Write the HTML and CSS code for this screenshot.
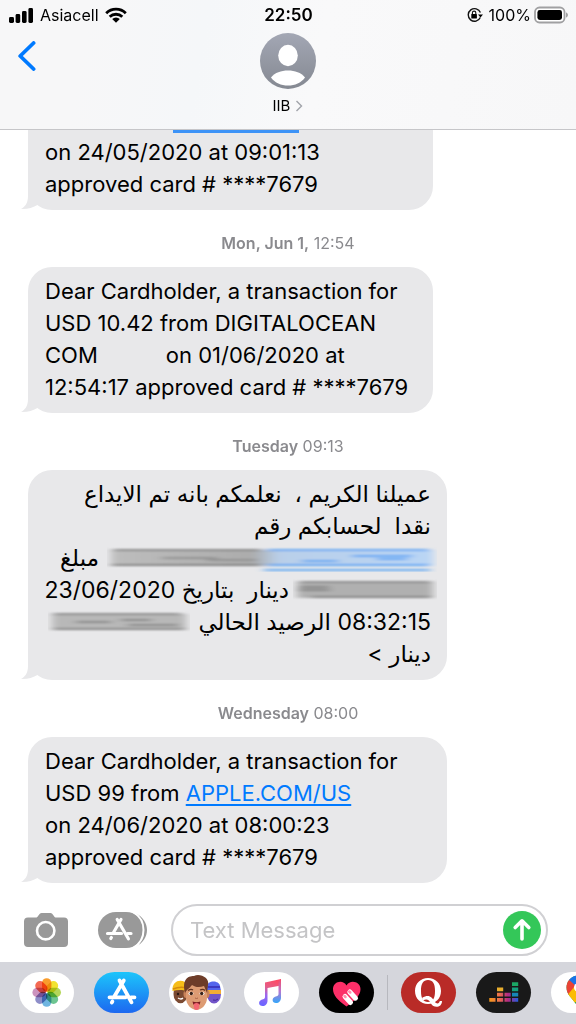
FILE: index.html
```
<!DOCTYPE html>
<html lang="en">
<head>
<meta charset="utf-8">
<meta name="viewport" content="width=device-width, initial-scale=1">
<title>IIB</title>
<link rel="stylesheet" href="styles.css">
</head>
<body>
<div class="screen">
  <header class="header">
    <div class="status">
      <div class="status-left">
        <svg class="signal" width="25" height="16" viewBox="0 0 25 16"><rect x="0" y="10" width="5" height="6" rx="1.4"/><rect x="6.6" y="7" width="4.6" height="9" rx="1.4"/><rect x="13" y="4" width="4.6" height="12" rx="1.4"/><rect x="19.4" y="1" width="4.6" height="15" rx="1.4"/></svg>
        <span>Asiacell</span>
        <svg class="wifi" width="22" height="16" viewBox="0 0 22 16"><g fill="none" stroke="#000" stroke-width="2.8"><path d="M1.2 6.2a14 14 0 0 1 19.6 0"/><path d="M4.7 9.8a9 9 0 0 1 12.6 0"/></g><path d="M11 15.8 7.2 12a5.4 5.4 0 0 1 7.6 0z"/></svg>
      </div>
      <time class="clock">22:50</time>
      <div class="status-right">
        <svg width="16" height="16" viewBox="0 0 16 16"><path d="M13.3 10.5A6.3 6.3 0 1 1 13.4 5.6" fill="none" stroke="#111" stroke-width="1.4"/><path d="M11 7.4h5l-2.500 3.200z"/><rect x="4.300" y="7" width="5.600" height="4.600" rx=".6"/><path d="M5.400 7.200V5.800a1.700 1.700 0 0 1 3.400 0v1.400" fill="none" stroke="#111" stroke-width="1.100"/></svg>
        <span>100%</span>
        <svg width="34" height="18" viewBox="0 0 34 18"><rect x="1" y="1.500" width="29.500" height="15" rx="4.500" fill="#fff" stroke="#a0a0a2" stroke-width="1.800"/><rect x="3.400" y="4" width="24.600" height="10" rx="2.400"/><path d="M32 6.300q2 1 2 2.700t-2 2.700z" fill="#a0a0a2"/></svg>
      </div>
    </div>
    <div class="nav">
      <button class="back" aria-label="Back"><svg width="18" height="30" viewBox="0 0 18 30"><path d="M15.600 2 2.200 15l13.400 13" fill="none" stroke="#007aff" stroke-width="3.800" stroke-linecap="round" stroke-linejoin="round"/></svg></button>
      <button class="contact">
        <svg width="56" height="56" viewBox="0 0 56 56"><defs><linearGradient id="av" x2="0" y2="1"><stop stop-color="#a3a7b4"/><stop offset="1" stop-color="#858992"/></linearGradient></defs><circle cx="28" cy="28" r="28" fill="url(#av)"/><ellipse cx="28" cy="22.500" rx="9.800" ry="10.700" fill="#fff"/><path d="M11 44.500C15 39.500 21 37.500 28 37.500s13 2 17 7c-4 5.500-10 8-17 8s-13-2.500-17-8z" fill="#fff"/></svg>
        <span class="contact-name">IIB <svg width="8" height="12" viewBox="0 0 8 12"><path d="M1.500 1 6.500 6l-5 5" fill="none" stroke="#a0a3a9" stroke-width="1.400"/></svg></span>
      </button>
    </div>
  </header>

  <main class="thread">
    <section class="bubble bubble-cut">
      <div class="link-underline"></div>
      <p>on 24/05/2020 at 09:01:13<br>approved card # ****7679</p>
      <svg class="tail" width="18" height="24" viewBox="0 0 18 24"><path d="M7 0v10C7 17 4 21 0 23q9 .5 17-4.200V0z"/></svg>
    </section>
    <time class="stamp"><b>Mon, Jun 1,</b> 12:54</time>
    <section class="bubble">
      <p>Dear Cardholder, a transaction for<br>USD 10.42 from DIGITALOCEAN<br>COM<span class="wide-gap"></span>on 01/06/2020 at<br>12:54:17 approved card # ****7679</p>
      <svg class="tail" width="18" height="24" viewBox="0 0 18 24"><path d="M7 0v10C7 17 4 21 0 23q9 .5 17-4.200V0z"/></svg>
    </section>
    <time class="stamp"><b>Tuesday</b> 09:13</time>
    <section class="bubble bubble-wide">
      <div class="arabic" lang="ar" dir="rtl">
        <p>عميلنا الكريم ،&nbsp; نعلمكم بانه تم الايداع</p>
        <p>نقدا&nbsp; لحسابكم رقم</p>
        <p class="masked"><svg class="mask-account" width="330" height="28" viewBox="0 0 330 28"><defs>
          <filter id="soft" x="-10%" y="-40%" width="120%" height="180%"><feGaussianBlur stdDeviation="4 .8"/></filter>
          <linearGradient id="acc"><stop stop-color="#bdbdbd"/><stop offset=".44" stop-color="#acacac"/><stop offset=".52" stop-color="#b9cfe9"/><stop offset="1" stop-color="#b9d5f5"/></linearGradient></defs>
          <g filter="url(#soft)"><rect x="4" y="6" width="322" height="16" fill="url(#acc)"/><path d="M6 6h148M4 21h150" stroke="#727272" stroke-width="1.500"/><path d="M55 14h55M100 16h50" stroke="#888" stroke-width="1.500"/><path d="M160 6h162M160 21h162M157 26h166M245 12h60M195 17h36M270 15h30" stroke="#3e97f5" stroke-width="1.600"/></g></svg><span>مبلغ</span></p>
        <p class="masked masked-tight"><svg class="mask-amount" width="144" height="28" viewBox="0 0 144 28"><g filter="url(#soft)"><rect x="4" y="6" width="136" height="16" fill="#b0b0b0"/><path d="M6 6h132M18 21h120M6 11h30M5 14h32" stroke="#777" stroke-width="1.500"/></g></svg><span>دينار&nbsp; بتاريخ 23/06/2020</span></p>
        <p class="masked"><span>08:32:15 الرصيد الحالي</span><svg class="mask-balance" width="142" height="28" viewBox="0 0 142 28"><g filter="url(#soft)"><rect x="4" y="6" width="134" height="16" fill="#b8b8b8"/><path d="M5 6h128M5 21h132M28 14h35M73 12h30M80 17h50" stroke="#777" stroke-width="1.500"/></g></svg></p>
        <p>دينار &gt;</p>
      </div>
      <svg class="tail" width="18" height="24" viewBox="0 0 18 24"><path d="M7 0v10C7 17 4 21 0 23q9 .5 17-4.200V0z"/></svg>
    </section>
    <time class="stamp"><b>Wednesday</b> 08:00</time>
    <section class="bubble bubble-wide">
      <p>Dear Cardholder, a transaction for<br>USD 99 from <a href="#">APPLE.COM/US</a><br>on 24/06/2020 at 08:00:23<br>approved card # ****7679</p>
      <svg class="tail" width="18" height="24" viewBox="0 0 18 24"><path d="M7 0v10C7 17 4 21 0 23q9 .5 17-4.200V0z"/></svg>
    </section>
  </main>

  <form class="composer">
    <button type="button" class="camera" aria-label="Camera"><svg width="44" height="34" viewBox="0 0 44 34"><path d="M4 4.500h8.500c1.500 0 2.500-4.500 5-4.500h9c2.500 0 3.500 4.500 5 4.500H40a4 4 0 0 1 4 4V30a4 4 0 0 1-4 4H4a4 4 0 0 1-4-4V8.500a4 4 0 0 1 4-4z" fill="#999"/><circle cx="21.700" cy="17.700" r="8.700" fill="none" stroke="#fff" stroke-width="2.600"/></svg></button>
    <button type="button" class="apps" aria-label="Apps"><svg width="50" height="36" viewBox="0 0 50 36"><path d="M38 1.500C45 5 49 11 49 18s-4 13-11 16.500C48 24 48 12 38 1.500z" fill="#999"/><rect width="46" height="36" rx="18" fill="#999"/><path d="M35 0C49 8 49 28 35 36" fill="none" stroke="#fff" stroke-width="2"/><g fill="none" stroke="#fff" stroke-width="3.200" stroke-linecap="round"><path d="M19.200 7.500 30.400 26.800M23 7.500 15.500 20.500M9.500 21.500h14M29.500 21.500h3.500M13.400 25.500l-.6 1"/></g></svg></button>
    <div class="field">
      <input type="text" aria-label="Text Message" placeholder="Text Message">
      <button type="button" class="send" aria-label="Send"><svg width="38" height="38" viewBox="0 0 38 38"><circle cx="19" cy="19" r="19" fill="#34c759"/><path d="M19 28V10M12.200 16.500 19 9.800l6.800 6.700" fill="none" stroke="#fff" stroke-width="3.600" stroke-linecap="round" stroke-linejoin="round"/></svg></button>
    </div>
  </form>

  <nav class="tray" aria-label="App drawer">
    <button class="app" aria-label="Photos"><svg width="55" height="41" viewBox="0 0 55 41"><g class="petals" transform="translate(27.700 20.500)">
      <rect x="-4.700" y="-14.300" width="9.400" height="13.500" rx="4.700" fill="#f99c2c"/>
      <rect x="-4.700" y="-14.300" width="9.400" height="13.500" rx="4.700" fill="#f2e32f" transform="rotate(45)"/>
      <rect x="-4.700" y="-14.300" width="9.400" height="13.500" rx="4.700" fill="#b4d658" transform="rotate(90)"/>
      <rect x="-4.700" y="-14.300" width="9.400" height="13.500" rx="4.700" fill="#6dc591" transform="rotate(135)"/>
      <rect x="-4.700" y="-14.300" width="9.400" height="13.500" rx="4.700" fill="#6fb5e0" transform="rotate(180)"/>
      <rect x="-4.700" y="-14.300" width="9.400" height="13.500" rx="4.700" fill="#8e8ec9" transform="rotate(225)"/>
      <rect x="-4.700" y="-14.300" width="9.400" height="13.500" rx="4.700" fill="#cc93be" transform="rotate(270)"/>
      <rect x="-4.700" y="-14.300" width="9.400" height="13.500" rx="4.700" fill="#f46a54" transform="rotate(315)"/></g></svg></button>
    <button class="app app-store" aria-label="App Store"><svg width="55" height="41" viewBox="0 0 55 41"><g fill="none" stroke="#fff" stroke-width="3.800" stroke-linecap="round"><path d="M25.500 8.500 37.500 30.300M29.800 8.500 20 25M15.500 25.300h16M37 25.300h3.500M18.400 29.500l-.6 1"/></g></svg></button>
    <button class="app" aria-label="Memoji"><svg width="55" height="41" viewBox="0 0 55 41">
      <ellipse cx="11.500" cy="22" rx="7" ry="9.300" fill="#7b4a32"/><path d="M3.500 19c-1-12 12-13 16-5v6c-6-3-11-2-16-1z" fill="#f6bd19"/><path d="M4 17q7-3 14-1" fill="none" stroke="#d68b0c" stroke-width="1.500"/><circle cx="9" cy="22" r="1.200" fill="#281712"/><path d="M9 26q3 2 5 0" stroke="#fff" stroke-width="1.300" fill="none"/>
      <ellipse cx="45" cy="22" rx="7" ry="9.500" fill="#7254c9"/><path d="M38 15c0-7 12-7 13-1l1 5H38z" fill="#5365ed"/><path d="M38 18h14v4H39z" fill="#f3ac35"/><path d="M39 15h12" stroke="#352bb2" stroke-width="1.500"/><path d="M44 28q3 1 5-1" stroke="#452797" fill="none"/>
      <ellipse cx="17" cy="22" rx="2.500" ry="4" fill="#c98259"/><ellipse cx="38" cy="22" rx="2.500" ry="4" fill="#c98259"/><path d="M17 15c0-8 21-8 21 0v11c0 7-6 12-10.500 12S17 33 17 26z" fill="#dd9b73"/><path d="M16 21C13 8 18 4 25 4c6-3 16 2 14 9l-1 8-3-7c-5 2-9 1-12-1-3 4-5 4-7 8z" fill="#6d3c29"/><path d="M19 18.500q3-2 5-.5M31 18q3-1.500 5 .5" stroke="#603221" stroke-width="1.300" fill="none"/><ellipse cx="22" cy="21.500" rx="2.500" ry="1.800" fill="#fff"/><ellipse cx="33" cy="21.500" rx="2.500" ry="1.800" fill="#fff"/><circle cx="22.300" cy="21.500" r="1.700" fill="#3b2217"/><circle cx="32.700" cy="21.500" r="1.700" fill="#3b2217"/><path d="M26 26q1.500 1 3 0" stroke="#aa6448" fill="none"/><path d="M23.500 29.500q4 1.500 8 0-1 5-4 5t-4-5z" fill="#7b1b22"/><path d="M24.800 32q2.700-2 5.400 0v3c0 4-5.400 4-5.400 0z" fill="#f36772"/></svg></button>
    <button class="app" aria-label="Music"><svg width="55" height="41" viewBox="0 0 55 41"><defs><linearGradient id="note" x1=".7" y1="0" x2=".4" y2="1"><stop stop-color="#ff4864"/><stop offset=".35" stop-color="#e65e86"/><stop offset=".65" stop-color="#9c66ee"/><stop offset="1" stop-color="#6f65ff"/></linearGradient><linearGradient id="note-right" x2="0" y2="1"><stop stop-color="#f84964"/><stop offset=".5" stop-color="#b877d0"/><stop offset="1" stop-color="#33a6fa"/></linearGradient></defs><path d="M21 10.500 37 7v6.500L23.500 16v12.500c0 3.500-2 5.500-5 5.500-4 0-4.500-5-1-6.300 2.500-1 3.500-.7 3.500-2.700z" fill="url(#note)"/><path d="M34.500 9 37 7v18.500c0 3.500-2 5.500-5 5.500-4 0-4.500-5-1-6.300 2.500-1 3.500-.7 3.500-2.700z" fill="url(#note-right)"/></svg></button>
    <button class="app app-black" aria-label="Digital Touch"><svg width="55" height="41" viewBox="0 0 55 41"><path d="M27.500 34.500C18 27.500 14 23 14 17c0-7.500 10-10 13.500-3.500C31 7 41.500 9.500 41.500 17c0 6-4.500 10.500-14 17.500z" fill="#fc2f68"/><g stroke="#fff" stroke-width="5" stroke-linecap="round"><path d="m26 24.500 5.500 6M30.800 20l5.700 6.200"/></g><path d="m25.500 24 1 1M30.300 19.500l1 1" stroke="#ff8fae" stroke-width="2.500" stroke-linecap="round"/></svg></button>
    <span class="divider"></span>
    <button class="app app-quora" aria-label="Quora"><svg width="55" height="41" viewBox="0 0 55 41"><path fill-rule="evenodd" d="M27 6C19.500 6 14 11.500 14 19s5.500 13 13 13 13-5.500 13-13S34.500 6 27 6zm0 2c4.800 0 7 3.500 7 11s-2.200 11-7 11-7-3.500-7-11 2.200-11 7-11z" fill="#fff"/><path d="M21 26c7-4.500 10-.5 12 2.700 2 3.300 5 3.800 5.800.3H41c0 7-8.500 7.500-11 2.500-2-4-4.500-5-8-3z" fill="#fff"/></svg></button>
    <button class="app app-deezer" aria-label="Deezer"><svg width="55" height="41" viewBox="0 0 55 41"><defs><linearGradient id="dz" gradientUnits="userSpaceOnUse" x1="13" x2="42" y1="0" y2="0"><stop stop-color="#f79a18"/><stop offset=".35" stop-color="#ee724d"/><stop offset=".65" stop-color="#b52982"/><stop offset="1" stop-color="#245dde"/></linearGradient></defs><path d="M13.300 26h6.200v3.700h-6.200zM21 26h6.200v3.700H21zM28.500 26h6.200v3.700h-6.200zM36 26h6.200v3.700H36zM21 20.800h6.200v3.700H21zM28.500 20.800h6.200v3.700h-6.200z" fill="url(#dz)"/><path d="M21 15.500h6.200v3.700H21z" fill="#e9ae2d"/><path d="M36 20.800h6.200v3.700H36z" fill="#1686b8"/><path d="M36 15.500h6.200v3.700H36z" fill="#15a07e"/><path d="M36 10.300h6.200V14H36z" fill="#1ba765"/></svg></button>
    <button class="app" aria-label="Google Maps"><svg width="55" height="41" viewBox="0 0 55 41"><defs><clipPath id="pin"><path d="M27.500 3.500c-7 0-12 5.500-12 12 0 9 8.500 11.500 12 22 3.500-10.500 12-13 12-22 0-6.500-5-12-12-12z"/></clipPath></defs><g clip-path="url(#pin)"><path d="M14 2h28v37H14z" fill="#34a853"/><path d="M14 7h5l7 7-12 13z" fill="#ea4335"/><path d="m17 7 9 8L37 0H20z" fill="#1a73e8"/><path d="m37 0-9 13 5 6 8-10z" fill="#4285f4"/><path d="m14 26 10-12 8 7-12 14z" fill="#fbbc04"/></g><circle cx="27.500" cy="15.500" r="4.500" fill="#fff"/></svg></button>
  </nav>
</div>
</body>
</html>
```

FILE: styles.css
```
* { box-sizing: border-box; }
body { margin: 0; background: #fff; color: #000; font-family: Inter, "DejaVu Sans", sans-serif; }
p { margin: 0; }
svg { display: block; flex: none; }
button { display: block; padding: 0; border: 0; background: none; font: inherit; color: inherit; }
.screen { display: flex; flex-direction: column; height: 100vh; overflow: hidden; }

.header { flex: none; border-bottom: 1px solid #c6c6c9; background: linear-gradient(100deg, #f7f7f8 15%, #f5f7f9 35%, #f9f9fa 55%, #f7f7f8 100%); }
.status { display: grid; grid-template-columns: 1fr auto 1fr; align-items: center; height: 29px; padding: 0 8px 0 9px; font-size: 16px; }
.status-left, .status-right { display: flex; align-items: center; gap: 6px; }
.status-right { justify-content: flex-end; }
.status-right svg:last-child { margin-left: -3px; }
.clock { font-size: 17px; font-weight: 600; }
.nav { display: grid; grid-template-columns: 1fr auto 1fr; align-items: start; padding: 4px 18px 13px; }
.back { justify-self: start; padding-top: 8px; }
.contact { display: flex; flex-direction: column; align-items: center; gap: 7px; }
.contact-name { display: flex; align-items: center; gap: 5px; font-size: 15px; line-height: 20px; }

.thread { flex: 1; min-height: 0; display: flex; flex-direction: column; justify-content: flex-end; padding-left: 28px; overflow: hidden; }
.bubble { position: relative; flex: none; width: 100%; max-width: 405px; padding: 8px 16px 10px 17px; border-radius: 24px; background: #e8e8ea; font-size: 22px; line-height: 32px; white-space: nowrap; }
.bubble-wide { max-width: 419px; }
.bubble-cut { padding-top: 0; border-top-left-radius: 0; border-top-right-radius: 0; }
.bubble a { color: #007aff; text-decoration-thickness: 2px; text-underline-offset: 3px; }
.link-underline { width: 126px; height: 3px; margin: 0 0 3px 128px; background: #3d93f7; }
.tail { position: absolute; left: -7px; bottom: 0; fill: #e8e8ea; }
.wide-gap { display: inline-block; width: 68px; }
.stamp { flex: none; height: 57px; padding-top: 23px; padding-right: 28px; text-align: center; font-size: 16px; line-height: 20px; color: #8a8a8e; }
.stamp b { font-weight: 600; }
.arabic { font-size: 23px; }
.arabic p { height: 32px; }
.masked { display: flex; align-items: center; gap: 8px; }
.masked-tight { gap: 4px; }
.mask-account, .mask-amount { margin-right: -6px; }

.composer { flex: none; display: flex; align-items: center; height: 79px; padding: 15px 28px 0 24px; }
.apps { margin: 0 23px 0 30px; }
.field { flex: 1; min-width: 0; display: flex; align-items: center; height: 52px; padding: 0 5px 0 17px; border: 2px solid #d0d0d3; border-radius: 26px; }
.field input { flex: 1; min-width: 0; padding: 0; border: 0; outline: 0; background: none; font: inherit; font-size: 22px; line-height: 28px; }
.field input::placeholder { color: #c4c4c6; opacity: 1; }

.tray { flex: none; display: flex; align-items: flex-start; gap: 20px; height: 62px; padding: 10px 0 0 19px; overflow: hidden; background: #d5d6dc; }
.app { flex: none; width: 55px; border-radius: 21px; background: #fff; overflow: hidden; }
.app-store { background: linear-gradient(#1cc5fb, #1d68f0); }
.app-black { background: #000; }
.app-quora { background: #b92b27; }
.app-deezer { background: #191919; }
.petals rect { mix-blend-mode: multiply; }
.divider { flex: none; width: 1px; height: 35px; margin: 3px -7px 0; background: #b7b8be; }
```
